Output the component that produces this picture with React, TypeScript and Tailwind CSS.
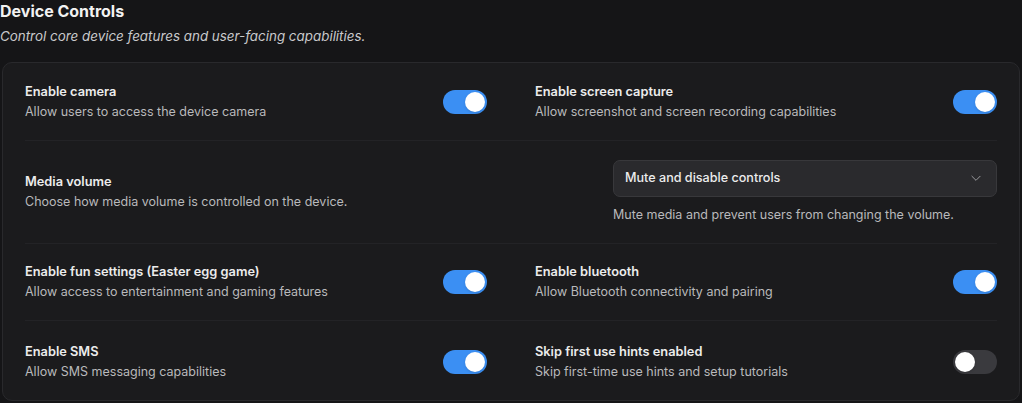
import React from "react";

function Toggle({ on }: { on: boolean }) {
  return (
    <div
      className={
        "relative h-[24px] w-[44px] shrink-0 rounded-full " +
        (on ? "bg-[#3b8ff3]" : "bg-[#3a3a3e]")
      }
    >
      <div
        className={
          "absolute top-[2px] h-[20px] w-[20px] rounded-full bg-white shadow " +
          (on ? "left-[22px]" : "left-[2px]")
        }
      />
    </div>
  );
}

function Setting({ title, desc, on }: { title: string; desc: string; on: boolean }) {
  return (
    <div className="flex items-center justify-between">
      <div className="flex flex-col">
        <div className="text-[12.8px] font-semibold leading-5 text-[#ececec]">{title}</div>
        <div className="text-[12.5px] leading-5 text-[#b9b9bb]">{desc}</div>
      </div>
      <Toggle on={on} />
    </div>
  );
}

export default function App() {
  return (
    <div
      className="h-[403px] w-[1022px] overflow-hidden bg-[#151517]"
      style={{ fontFamily: "Inter, 'Noto Sans', sans-serif" }}
    >
      <div className="pt-[1px]">
        <h1 className="text-[16px] font-bold leading-5 text-[#f2f2f2]">Device Controls</h1>
        <p className="mt-[5px] text-[13.4px] italic leading-5 text-[#c9c9cb]">
          Control core device features and user-facing capabilities.
        </p>
      </div>
      <div className="mx-[2px] mt-[16px] rounded-[10px] border border-[#29292c] bg-[#1b1b1d] px-[22px]">
        <div className="grid h-[78px] grid-cols-2 items-center gap-x-12 border-b border-[#232326]">
          <Setting title="Enable camera" desc="Allow users to access the device camera" on />
          <Setting
            title="Enable screen capture"
            desc="Allow screenshot and screen recording capabilities"
            on
          />
        </div>
        <div className="grid h-[103px] grid-cols-2 items-center gap-x-12 border-b border-[#232326]">
          <div className="flex flex-col">
            <div className="text-[12.8px] font-semibold leading-5 text-[#ececec]">Media volume</div>
            <div className="text-[12.5px] leading-5 text-[#b9b9bb]">
              Choose how media volume is controlled on the device.
            </div>
          </div>
          <div className="flex justify-end">
            <div className="flex w-[384px] flex-col">
              <div className="flex h-[37px] items-center justify-between rounded-[7px] border border-[#38383b] bg-[#2a2a2d] pl-[11px] pr-[13px]">
                <span className="text-[12.6px] font-medium text-[#ececec]">Mute and disable controls</span>
                <svg width="14" height="14" viewBox="0 0 24 24" fill="none" stroke="#a3a3a6" strokeWidth="1.6" strokeLinecap="round" strokeLinejoin="round">
                  <path d="m5 9 7 7 7-7" />
                </svg>
              </div>
              <div className="mt-[8px] text-[12.5px] leading-5 text-[#b9b9bb]">
                Mute media and prevent users from changing the volume.
              </div>
            </div>
          </div>
        </div>
        <div className="grid h-[77px] grid-cols-2 items-center gap-x-12 border-b border-[#232326]">
          <Setting
            title="Enable fun settings (Easter egg game)"
            desc="Allow access to entertainment and gaming features"
            on
          />
          <Setting title="Enable bluetooth" desc="Allow Bluetooth connectivity and pairing" on />
        </div>
        <div className="grid h-[79px] grid-cols-2 items-center gap-x-12 pt-[2px]">
          <Setting title="Enable SMS" desc="Allow SMS messaging capabilities" on />
          <Setting
            title="Skip first use hints enabled"
            desc="Skip first-time use hints and setup tutorials"
            on={false}
          />
        </div>
      </div>
    </div>
  );
}
